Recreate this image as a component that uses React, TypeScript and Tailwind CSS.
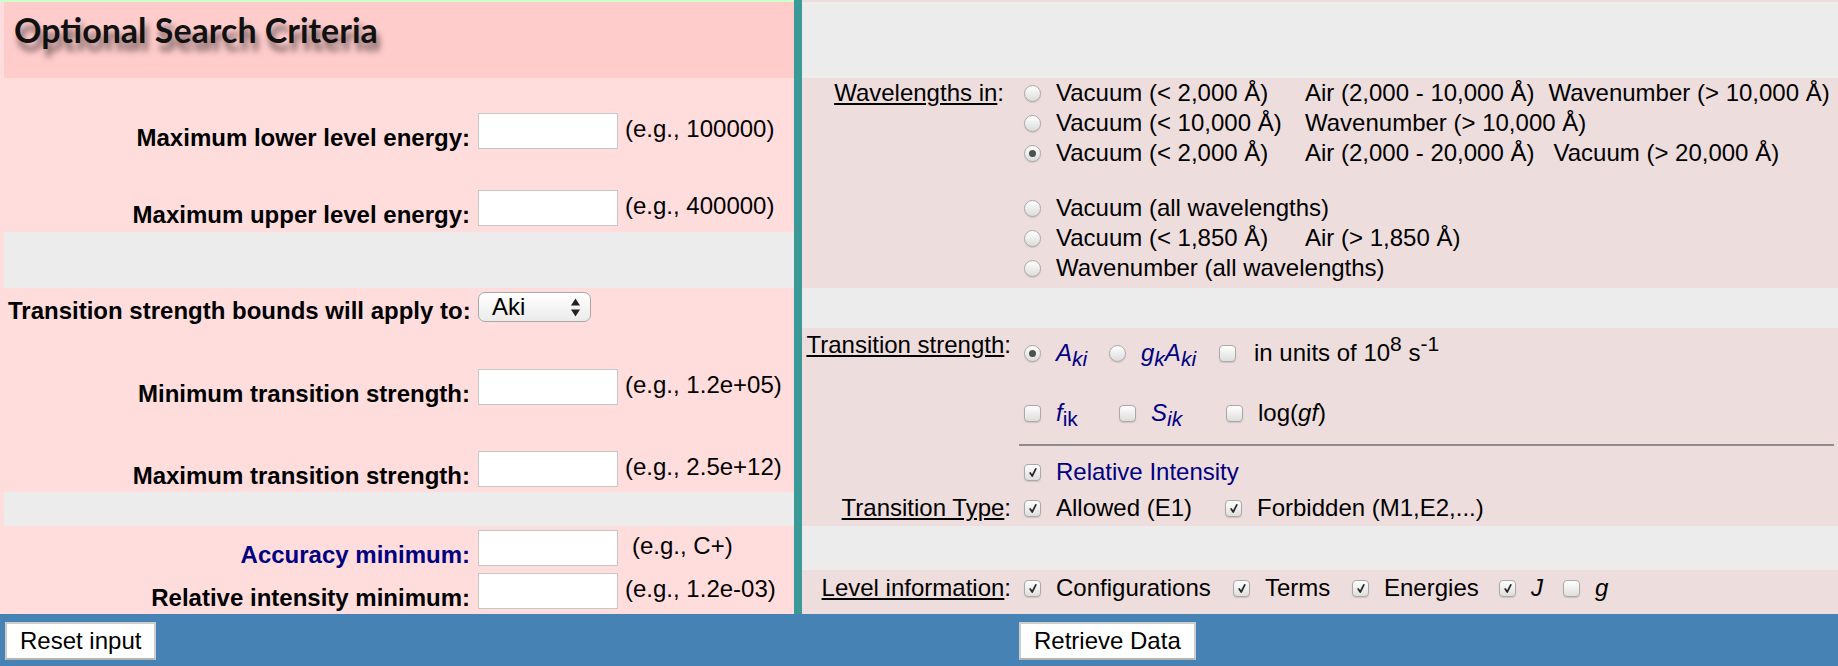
import type { ReactNode } from 'react'

function Radio({ checked = false }: { checked?: boolean }) {
  return (
    <span className="inline-flex w-[17px] h-[17px] shrink-0 items-center justify-center rounded-full border border-[#a9a9a9] bg-linear-to-b from-white to-[#dcdcdc] shadow-[0_1px_1px_rgba(0,0,0,0.12)]">
      {checked && <span className="w-[7px] h-[7px] rounded-full bg-[#505050]" />}
    </span>
  )
}

function Checkbox({ checked = false }: { checked?: boolean }) {
  return (
    <span className="inline-flex w-[17px] h-[17px] shrink-0 items-center justify-center rounded-[4px] border border-[#a9a9a9] bg-linear-to-b from-white to-[#dedede] shadow-[0_1px_1px_rgba(0,0,0,0.12)]">
      {checked && (
        <svg width="10" height="11" viewBox="0 0 10 11">
          <path d="M2.2 6 L4.2 9 L7.8 1.8" fill="none" stroke="#262626" strokeWidth="1.7" strokeLinecap="round" strokeLinejoin="round" />
        </svg>
      )}
    </span>
  )
}

function Button({ children }: { children: ReactNode }) {
  return (
    <button className="h-[38px] px-[13px] bg-white border-2 border-[#cdcdcd] border-b-[#b3b3b3] text-[24px] leading-none text-black">
      {children}
    </button>
  )
}

function FieldRow({
  label,
  hint,
  className = '',
  labelClass = 'text-black',
  hintClass = 'ml-[7px]',
}: {
  label: string
  hint: string
  className?: string
  labelClass?: string
  hintClass?: string
}) {
  return (
    <div className={`flex items-end ${className}`}>
      <div className={`w-[478px] pr-[8px] text-right font-bold leading-[22px] whitespace-nowrap ${labelClass}`}>{label}</div>
      <input className="w-[140px] h-[36px] bg-white border border-[#c6c6c6] outline-none" />
      <div className={`self-start pt-[2px] leading-[28px] whitespace-nowrap ${hintClass}`}>{hint}</div>
    </div>
  )
}

function LeftPanel() {
  return (
    <div className="w-[794px] flex flex-col bg-[#ffdddd]">
      <div className="h-[2px] bg-[#ccffcc]" />
      <div className="h-[76px] ml-[4px] bg-[#ffcccc] pt-[10px] pl-[10px]">
        <h2 className="font-['Lato',sans-serif] font-bold text-[34px] leading-[36px] text-[#111] [text-shadow:3px_8px_6px_rgba(0,0,0,0.55)] whitespace-nowrap">
          Optional Search Criteria
        </h2>
      </div>

      <div className="h-[154px] pt-[35px] flex flex-col">
        <FieldRow label="Maximum lower level energy:" hint="(e.g., 100000)" />
        <FieldRow label="Maximum upper level energy:" hint="(e.g., 400000)" className="mt-[41px]" />
      </div>

      <div className="h-[56px] ml-[4px] bg-[#ececec]" />

      <div className="h-[204px] pt-[4px] flex flex-col">
        <div className="flex items-end h-[30px]">
          <div className="w-[478px] pl-[8px] font-bold leading-[22px] whitespace-nowrap">Transition strength bounds will apply to:</div>
          <div className="w-[113px] h-[30px] flex items-center justify-between pl-[13px] pr-[9px] rounded-[7px] border border-[#a8a8a8] bg-linear-to-b from-white to-[#ebebeb]">
            <span className="leading-none">Aki</span>
            <svg width="11" height="21" viewBox="0 0 11 21">
              <path d="M5.5 1.5 L10 8.5 L1 8.5 Z" fill="#222" />
              <path d="M5.5 19.5 L10 12.5 L1 12.5 Z" fill="#222" />
            </svg>
          </div>
        </div>
        <FieldRow label="Minimum transition strength:" hint="(e.g., 1.2e+05)" className="mt-[47px]" />
        <FieldRow label="Maximum transition strength:" hint="(e.g., 2.5e+12)" className="mt-[46px]" />
      </div>

      <div className="h-[34px] ml-[4px] bg-[#ececec]" />

      <div className="h-[88px] pt-[4px] flex flex-col">
        <FieldRow label="Accuracy minimum:" hint="(e.g., C+)" labelClass="text-[#000080]" hintClass="ml-[14px]" />
        <FieldRow label="Relative intensity minimum:" hint="(e.g., 1.2e-03)" className="mt-[7px]" />
      </div>
    </div>
  )
}

function Opt({ children, checked = false, box = false, className = '' }: { children: ReactNode; checked?: boolean; box?: boolean; className?: string }) {
  return (
    <span className={`flex items-center shrink-0 whitespace-nowrap ${className}`}>
      {box ? <Checkbox checked={checked} /> : <Radio checked={checked} />}
      <span className="ml-[15px]">{children}</span>
    </span>
  )
}

function RightPanel() {
  return (
    <div className="flex-1 flex flex-col bg-[#eedddd]">
      <div className="h-[2px]" />
      <div className="h-[76px] bg-[#ececec]" />

      {/* wavelengths */}
      <div className="h-[210px] flex">
        <div className="w-[217px] pr-[15px] text-right h-[30px] leading-[30px] whitespace-nowrap">
          <span className="underline">Wavelengths in</span>:
        </div>
        <div className="flex flex-col pl-[5px]">
          <div className="h-[30px] flex items-center whitespace-nowrap">
            <Radio />
            <span className="ml-[15px] w-[249px]">Vacuum (&lt; 2,000 Å)</span>
            <span>Air (2,000 - 10,000 Å)</span>
            <span className="ml-[14px]">Wavenumber (&gt; 10,000 Å)</span>
          </div>
          <div className="h-[30px] flex items-center whitespace-nowrap">
            <Radio />
            <span className="ml-[15px] w-[249px]">Vacuum (&lt; 10,000 Å)</span>
            <span>Wavenumber (&gt; 10,000 Å)</span>
          </div>
          <div className="h-[30px] flex items-center whitespace-nowrap">
            <Radio checked />
            <span className="ml-[15px] w-[249px]">Vacuum (&lt; 2,000 Å)</span>
            <span>Air (2,000 - 20,000 Å)</span>
            <span className="ml-[19px]">Vacuum (&gt; 20,000 Å)</span>
          </div>
          <div className="h-[30px] mt-[25px] flex items-center whitespace-nowrap">
            <Radio />
            <span className="ml-[15px]">Vacuum (all wavelengths)</span>
          </div>
          <div className="h-[30px] flex items-center whitespace-nowrap">
            <Radio />
            <span className="ml-[15px] w-[249px]">Vacuum (&lt; 1,850 Å)</span>
            <span>Air (&gt; 1,850 Å)</span>
          </div>
          <div className="h-[30px] flex items-center whitespace-nowrap">
            <Radio />
            <span className="ml-[15px]">Wavenumber (all wavelengths)</span>
          </div>
        </div>
      </div>

      <div className="h-[40px] bg-[#ececec]" />

      {/* transition strength */}
      <div className="h-[162px] flex">
        <div className="w-[217px] pr-[8px] text-right pt-[3px] leading-[28px] whitespace-nowrap">
          <span className="underline">Transition strength</span>:
        </div>
        <div className="flex-1 flex flex-col">
          <div className="h-[50px] flex items-center pl-[5px]">
            <Opt checked className="w-[85px]">
              <span className="italic text-[#000080]">A<sub className="text-[21px]">ki</sub></span>
            </Opt>
            <Opt className="w-[110px]">
              <span className="italic text-[#000080]">g<sub className="text-[21px]">k</sub>A<sub className="text-[21px]">ki</sub></span>
            </Opt>
            <span className="flex items-center">
              <Checkbox />
              <span className="ml-[18px] whitespace-nowrap">in units of 10<sup className="text-[21px]">8</sup> s<sup className="text-[21px]">-1</sup></span>
            </span>
          </div>
          <div className="h-[62px] pt-[8px] flex items-center pl-[5px]">
            <Opt box className="w-[95px]">
              <span className="text-[#000080]"><i>f</i><sub className="text-[21px]">ik</sub></span>
            </Opt>
            <Opt box className="w-[107px]">
              <span className="italic text-[#000080]">S<sub className="text-[21px]">ik</sub></span>
            </Opt>
            <Opt box>
              log(<i>gf</i>)
            </Opt>
          </div>
          <div className="mt-[4px] mr-[4px] border-t-2 border-[#8c8c8c]" />
          <div className="h-[36px] mt-[8px] flex items-center pl-[5px]">
            <Opt box checked>
              <span className="text-[#000080]">Relative Intensity</span>
            </Opt>
          </div>
        </div>
      </div>

      <div className="h-[36px] flex items-center">
        <div className="w-[217px] pr-[8px] text-right whitespace-nowrap">
          <span className="underline">Transition Type</span>:
        </div>
        <div className="flex items-center pl-[5px]">
          <Opt box checked className="w-[201px]">Allowed (E1)</Opt>
          <Opt box checked>Forbidden (M1,E2,...)</Opt>
        </div>
      </div>

      <div className="h-[44px] bg-[#ececec]" />

      {/* level information */}
      <div className="h-[44px] pt-[3px]">
        <div className="h-[30px] flex items-center">
          <div className="w-[217px] pr-[8px] text-right whitespace-nowrap">
            <span className="underline">Level information</span>:
          </div>
          <div className="flex items-center pl-[5px]">
            <Opt box checked className="w-[209px]">Configurations</Opt>
            <Opt box checked className="w-[119px]">Terms</Opt>
            <Opt box checked className="w-[147px]">Energies</Opt>
            <Opt box checked className="w-[64px]"><i>J</i></Opt>
            <Opt box><i>g</i></Opt>
          </div>
        </div>
      </div>
    </div>
  )
}

export default function App() {
  return (
    <div className="w-[1838px] h-[666px] flex flex-col overflow-hidden text-[24px] text-black font-['Liberation_Sans',Arial,Helvetica,sans-serif]">
      <div className="flex h-[614px]">
        <LeftPanel />
        <div className="w-[8px] bg-[#3b9a97]" />
        <RightPanel />
      </div>
      <div className="h-[52px] bg-[#4682b4] flex items-start pt-[8px]">
        <div className="w-[1019px] pl-[5px]">
          <Button>Reset input</Button>
        </div>
        <Button>Retrieve Data</Button>
      </div>
    </div>
  )
}
